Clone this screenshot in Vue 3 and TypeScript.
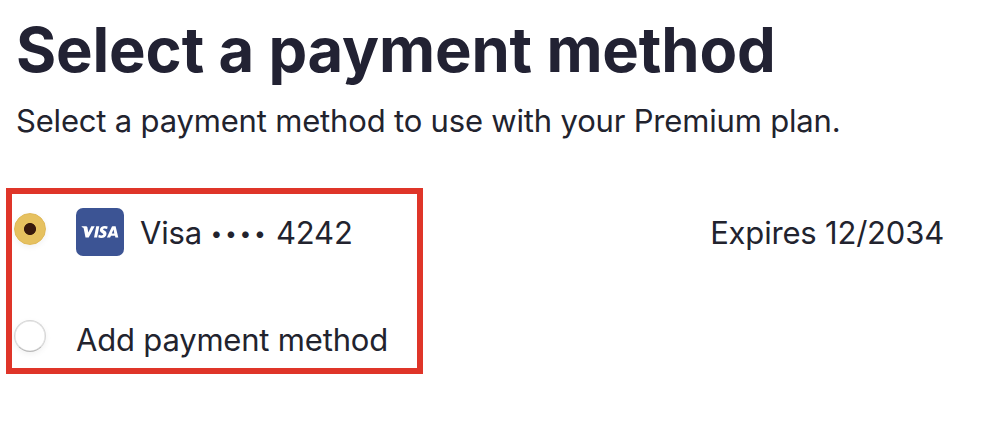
<script setup lang="ts">
import { ref } from 'vue'

interface PaymentMethod {
  id: string
  label: string
  last4?: string
  expires?: string
}

const methods: PaymentMethod[] = [
  { id: 'visa', label: 'Visa', last4: '4242', expires: 'Expires 12/2034' },
  { id: 'new', label: 'Add payment method' },
]

const selected = ref('visa')
</script>

<template>
  <main class="page">
    <h1 class="title">Select a payment method</h1>
    <p class="subtitle">Select a payment method to use with your Premium plan.</p>
    <div class="methods">
      <label v-for="m in methods" :key="m.id" class="method" :class="{ plain: !m.last4 }">
        <input v-model="selected" class="radio" type="radio" name="method" :value="m.id" />
        <svg v-if="m.last4" class="brand" viewBox="0 0 48 48" aria-hidden="true">
          <rect width="48" height="48" rx="7" fill="#3c5494" />
          <g fill="#fff">
            <path d="M5.7 18.2h4.2c.8 0 1.3.4 1.5 1.1l.9 5.3 3-6.4h3.4l-6 11.4H9.5L7.8 21c-.2-.9-.4-1.3-2.1-1.9z" />
            <path d="M20.2 18.2h3.1l-2.2 11.4H18z" />
            <path d="M31.7 18.5l-.6 2.5c-1.9-.9-4-.7-4 .3 0 1.4 3.5 1.3 3.4 4.4-.1 2.8-2.4 4.2-5.3 4.2-1.2 0-2.3-.3-3-.6l.6-2.6c1.8 1 4.5 1 4.5-.4 0-1.5-3.4-1.3-3.4-4.4 0-2.6 2.3-4 5-4 1.1 0 2.1.2 2.8.6z" />
            <path fill-rule="evenodd" d="M36.5 18.2h3.1l2.7 11.4h-2.9l-.4-1.8h-4l-.9 1.8h-3.2l4.7-10.4c.2-.6.5-1 .9-1zM37.5 21.5l-1.7 4h2.5z" />
          </g>
        </svg>
        <span class="label">{{ m.label }}<template v-if="m.last4">&nbsp;<span class="mask">••••</span>&nbsp;{{ m.last4 }}</template></span>
        <span v-if="m.expires" class="expires">{{ m.expires }}</span>
      </label>
      <div class="highlight"></div>
    </div>
  </main>
</template>

<style>
body {
  background: #fff;
}
</style>

<style scoped>
.page {
  box-sizing: border-box;
  height: 424px;
  padding: 20px 38px 0 16px;
  font-family: Inter, 'Liberation Sans', sans-serif;
  color: #22232e;
}
.title {
  margin: 0;
  font-size: 61.5px;
  line-height: 60px;
  font-weight: 700;
  letter-spacing: -0.15px;
  color: #222233;
  white-space: nowrap;
}
.subtitle {
  margin: 17px 0 0;
  font-size: 31px;
  line-height: 48px;
  letter-spacing: -0.18px;
  white-space: nowrap;
}
.methods {
  position: relative;
  margin-top: 43px;
  margin-left: -2px;
  display: flex;
  flex-direction: column;
}
.highlight {
  position: absolute;
  left: -8px;
  top: 0;
  width: 417px;
  height: 186px;
  box-sizing: border-box;
  border: 6px solid #df3529;
  pointer-events: none;
}
.method {
  display: flex;
  align-items: flex-start;
  box-sizing: border-box;
  padding-top: 20px;
  height: 107px;
  font-size: 31px;
  line-height: 48px;
  letter-spacing: -0.19px;
  white-space: nowrap;
}
.radio {
  appearance: none;
  box-sizing: border-box;
  flex: none;
  width: 32px;
  height: 32px;
  margin: 5px 0 0;
  border: 1.5px solid #d6d6d6;
  border-bottom-color: #b9b9b9;
  border-radius: 50%;
  background: #fff;
  box-shadow: 0 2px 6px rgba(0, 0, 0, 0.06), inset 0 0 0 0.5px #dcdcdc;
}
.radio:checked {
  border-color: #dfb857;
  background: radial-gradient(circle, #38190c 5.6px, #e6c15f 6.4px);
  box-shadow: 0 2px 6px rgba(0, 0, 0, 0.06);
}
.brand {
  flex: none;
  width: 48px;
  height: 48px;
  margin-left: 30px;
}
.label {
  margin-top: 1px;
  margin-left: 16px;
}
.mask {
  margin-right: -1px;
  font-size: 21px;
  line-height: 1;
  letter-spacing: 2.7px;
  vertical-align: 3px;
}
.plain .label {
  margin-left: 30px;
}
.expires {
  margin-top: 1px;
  margin-left: auto;
}
</style>
